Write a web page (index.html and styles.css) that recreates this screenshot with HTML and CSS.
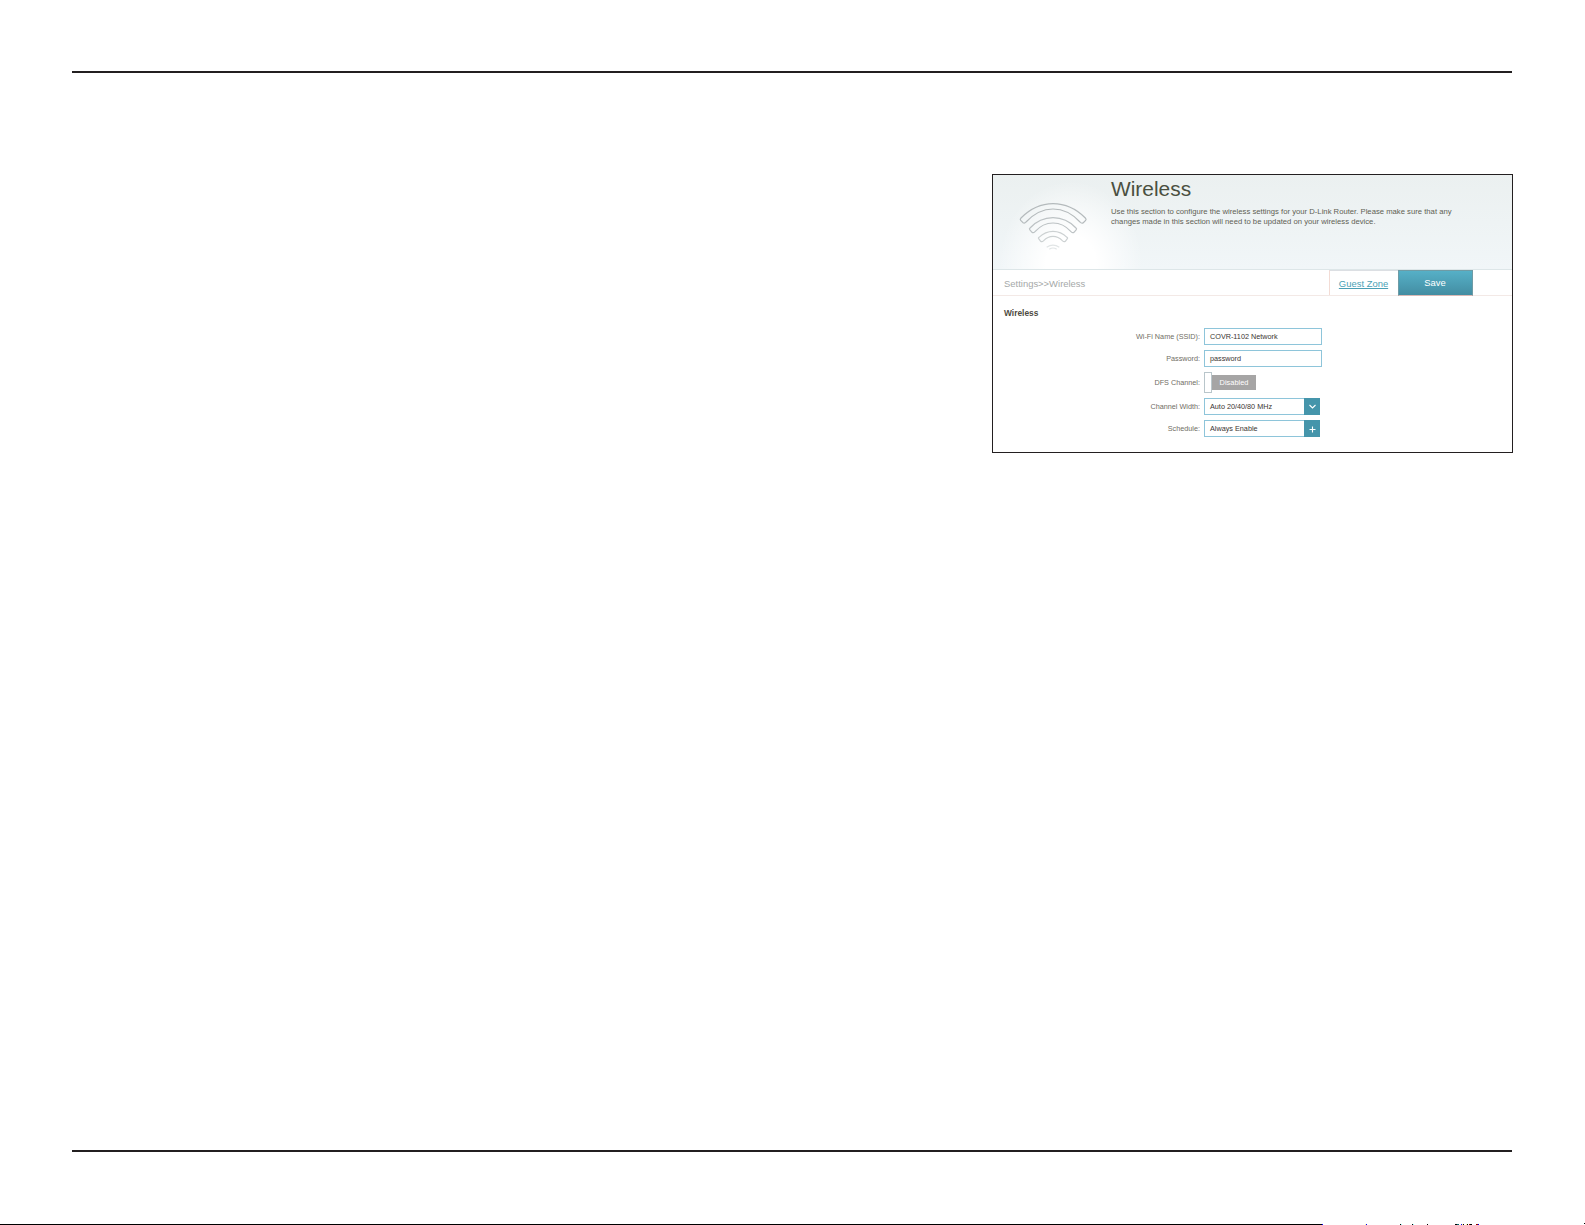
FILE: index.html
```html
<!DOCTYPE html>
<html lang="en">
<head>
  <meta charset="UTF-8">
  <meta name="viewport" content="width=device-width, initial-scale=1.0">
  <title>Wireless</title>
  <link rel="stylesheet" href="styles.css">
</head>
<body>
  <div class="page">
    <hr class="rule">
    <main class="panel">
      <header class="hero">
        <svg class="wifi" viewBox="95 98 216 150" fill="none" stroke-width="3.6" stroke-linejoin="round">
          <path stroke="#b4babc" d="M107 149Q150 106 203 106Q257 106 300 149Q304 153 301 156L293 164Q288 166 284 161Q248 122 203 122Q159 122 122 161Q118 166 113 163L106 156Q103 153 107 149Z"/>
          <path stroke="#bcc2c4" d="M134 179Q163 148 203 148Q243 148 272 179Q275 182 273 184L266 192Q262 195 257 190Q234 164 203 164Q172 164 149 190Q144 195 140 192L133 184Q131 182 134 179Z"/>
          <path stroke="#ccd1d2" d="M161 207Q180 189 203 189Q227 189 245 207Q248 209 246 211L240 219Q236 222 231 217Q219 204 203 204Q187 204 175 217Q170 222 166 219L160 211Q158 209 161 207Z"/>
          <path stroke="#e1e5e6" d="M184 237Q203 224 222 237M192 243Q203 235 214 243"/>
        </svg>
        <div class="intro">
          <h1>Wireless</h1>
          <p>Use this section to configure the wireless settings for your D-Link Router. Please make sure that any<br>changes made in this section will need to be updated on your wireless device.</p>
        </div>
      </header>

      <nav class="bar">
        <span class="crumbs">Settings&gt;&gt;Wireless</span>
        <a class="guest" href="#">Guest Zone</a>
        <button class="save">Save</button>
      </nav>

      <section class="settings">
        <h2>Wireless</h2>
        <div class="row">
          <span class="label">Wi-Fi Name (SSID):</span>
          <div class="field">COVR-1102 Network</div>
        </div>
        <div class="row">
          <span class="label">Password:</span>
          <div class="field">password</div>
        </div>
        <div class="row row-toggle">
          <span class="label">DFS Channel:</span>
          <div class="toggle"><span class="knob"></span><span class="state">Disabled</span></div>
        </div>
        <div class="row">
          <span class="label">Channel Width:</span>
          <div class="field select">Auto 20/40/80 MHz
            <span class="arrow"><svg viewBox="0 0 16 17"><path d="M5.5 7L8.5 10L11.5 7"/></svg></span>
          </div>
        </div>
        <div class="row">
          <span class="label">Schedule:</span>
          <div class="field select">Always Enable
            <span class="arrow"><svg viewBox="0 0 16 17"><path d="M5.5 9.5H11.5M8.5 6.5V12.5"/></svg></span>
          </div>
        </div>
      </section>
    </main>
    <hr class="rule rule-bottom">
    <svg class="edge" viewBox="0 0 1585 2" shape-rendering="crispEdges">
      <path fill="#000" d="M0 1H1322V2H0ZM1400 1h1v1h-1ZM1412 1h1v1h-1ZM1427 1h1v1h-1ZM1455 1h2v1h-2ZM1463 1h1v1h-1ZM1467 1h1v1h-1ZM1470 1h2v1h-2ZM1584 0h1v1h-1Z"/>
      <path fill="#00f" d="M1322 1h1v1h-1ZM1366 1h1v1h-1ZM1461 1h1v1h-1ZM1478 1h1v1h-1Z"/>
      <path fill="#ff9" d="M1365 1h1v1h-1ZM1462 1h1v1h-1ZM1466 1h1v1h-1Z"/>
      <path fill="#9ff" d="M1401 1h1v1h-1ZM1413 1h1v1h-1Z"/>
      <path fill="#066" d="M1457 1h2v1h-2Z"/>
      <path fill="#900" d="M1469 1h1v1h-1ZM1476 1h2v1h-2Z"/>
    </svg>
  </div>
</body>
</html>
```

FILE: styles.css
```css
* {
  box-sizing: border-box;
}

body {
  margin: 0;
  background: #fff;
  font-family: "Liberation Sans", Arial, sans-serif;
}

.page {
  display: flex;
  flex-direction: column;
  height: 1225px;
  padding-top: 71px;
  overflow: hidden;
}

.rule {
  width: 1440px;
  height: 2px;
  margin: 0 0 0 72px;
  border: 0;
  background: #231f20;
}

.rule-bottom {
  margin-top: auto;
}

.edge {
  display: block;
  width: 1585px;
  height: 2px;
  margin-top: 71px;
}

.panel {
  width: 521px;
  height: 279px;
  margin: 101px 0 0 992px;
  border: 1px solid #231f20;
}

.hero {
  display: flex;
  height: 95px;
  padding-left: 24px;
  border-bottom: 1px solid #dde6e8;
  background:
    radial-gradient(ellipse 72px 84px at 78px 90px, #fff 35%, rgba(255, 255, 255, 0) 100%),
    linear-gradient(#ebf0f0, #f1f6f8);
}

.wifi {
  width: 72px;
  height: 50px;
  margin-top: 26px;
}

.intro {
  margin-left: 22px;
}

h1 {
  margin: 2px 0 0;
  color: #4a4f40;
  font-size: 20.9px;
  font-weight: normal;
  line-height: 24px;
}

.intro p {
  margin: 6px 0 0;
  color: #5e5f54;
  font-size: 7.69px;
  line-height: 10.4px;
  white-space: nowrap;
}

.bar {
  display: flex;
  height: 26px;
  padding-right: 39px;
  border-bottom: 1px solid #f3e9e6;
  font-size: 9.45px;
  line-height: 25px;
}

.crumbs {
  flex: 1;
  padding: 1px 0 0 11px;
  color: #a5a8a8;
}

.guest {
  width: 69px;
  padding-right: 1px;
  border-top: 1px solid #dcdfe3;
  border-left: 1px solid #f3dcd5;
  color: #4a9fb5;
  text-align: center;
}

.save {
  width: 75px;
  height: 26px;
  padding: 0 1px 1px 0;
  border: 1px solid #6e9ba5;
  border-bottom-color: #d9b9b5;
  background: linear-gradient(#56b0c7, #438da2);
  color: #fff;
  font: inherit;
  line-height: 24px;
}

.settings {
  padding-left: 11px;
}

h2 {
  margin: 11px 0 8px;
  color: #4d4a40;
  font-size: 8.4px;
  line-height: 13px;
}

.row {
  display: flex;
  align-items: center;
  height: 17px;
  margin-bottom: 5px;
  font-size: 7.25px;
}

.label {
  width: 196px;
  margin-right: 4px;
  color: #6f6d64;
  text-align: right;
}

.field {
  width: 118px;
  height: 17px;
  padding-left: 5px;
  border: 1px solid #8ec5da;
  color: #3a3532;
  line-height: 16px;
  white-space: nowrap;
}

.select {
  display: flex;
  justify-content: space-between;
  width: 116px;
}

.arrow {
  width: 16px;
  height: 17px;
  margin: -1px -1px 0 0;
  background: #4595ab;
}

.arrow svg {
  display: block;
  fill: none;
  stroke: #fff;
  stroke-width: 1.1;
}

.row-toggle {
  height: 21px;
  margin-bottom: 5px;
}

.toggle {
  display: flex;
  align-items: center;
}

.knob {
  width: 8px;
  height: 21px;
  border: 1px solid #b9c6cb;
  background: #fff;
}

.state {
  width: 44px;
  height: 15px;
  background: #a6a5a5;
  color: #fff;
  font-size: 7.4px;
  line-height: 15px;
  text-align: center;
}
```
